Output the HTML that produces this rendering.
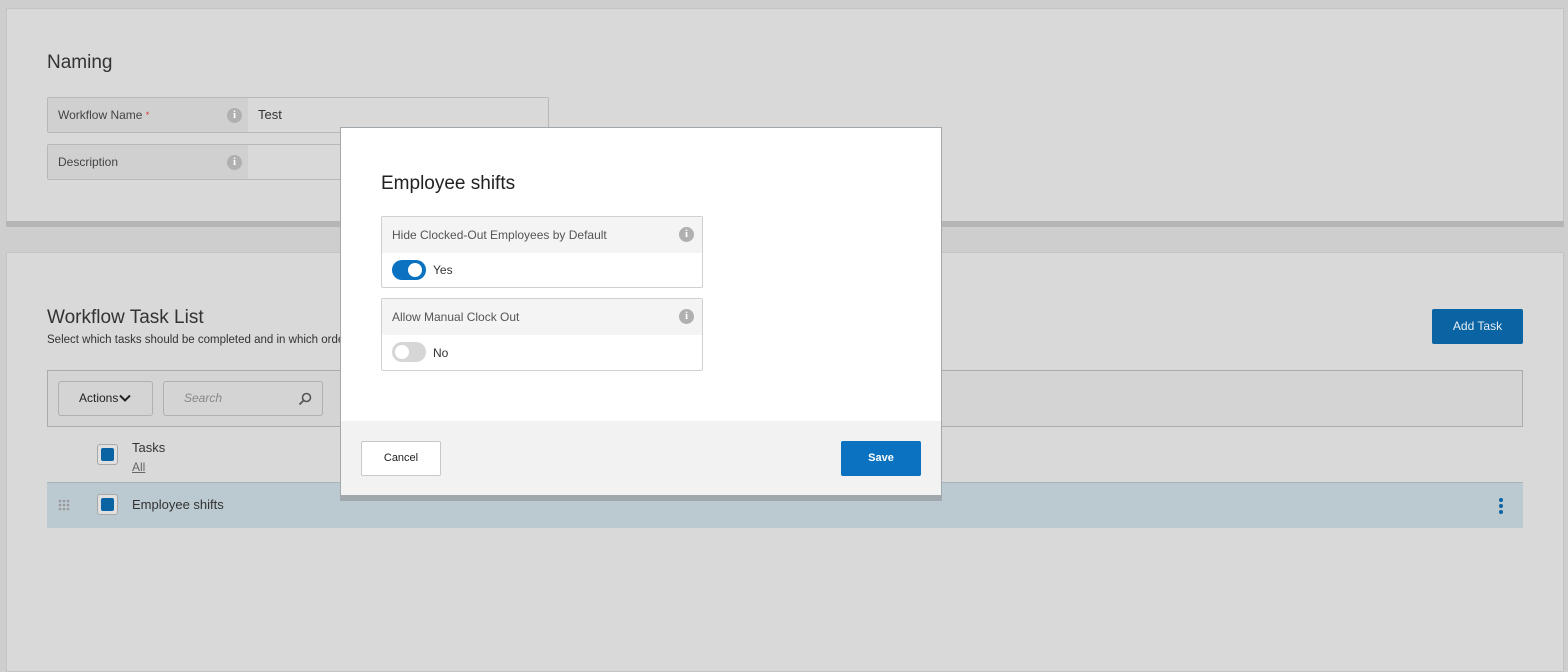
<!DOCTYPE html>
<html><head><style>
*{box-sizing:border-box;margin:0;padding:0}
body{width:1568px;height:659px;background:#cecece;font-family:"Liberation Sans",sans-serif;position:relative;overflow:hidden;color:#333}
.p{position:absolute;background:#d9d9d9;border:1px solid #c4c4c4}
.abs{position:absolute}
.fld{position:absolute;left:47px;width:502px;height:36px;border:1px solid #b8b8b8;border-radius:2px;background:#d9d9d9}
.fld .lab{position:absolute;left:0;top:0;width:200px;height:34px;background:#d0d0d0;font-size:12px;line-height:34px;padding-left:10px;color:#444}
.info{position:absolute;width:15px;height:15px;border-radius:50%;background:#b0b0b0;color:#fff;font-size:11px;font-weight:bold;text-align:center;line-height:15px;font-family:"Liberation Serif",serif}
.fld .lab2{position:absolute;left:200px;top:0;width:300px;height:34px;background:#d9d9d9}
.cb{position:absolute;width:21px;height:21px;border:1px solid #a8a8a8;border-radius:3px;background:#e0e0e0}
.cb:after{content:"";position:absolute;left:3px;top:3px;width:13px;height:13px;background:#0a64a4;border-radius:2px}
.card{position:absolute;left:40px;width:322px;border:1px solid #d0d0d0;border-radius:2px;background:#fff}
.card .h{height:36px;background:#f4f4f4;font-size:12px;line-height:36px;padding-left:10px;color:#555}
</style></head><body>
<div class="p" style="left:6px;top:8px;width:1558px;height:214px"></div>
<div class="abs" style="left:6px;top:221px;width:1558px;height:6px;background:#b5b5b5"></div>
<div class="abs" style="left:47px;top:52px;font-size:19px;color:#333">Naming</div>
<div class="fld" style="top:97px"><div class="lab">Workflow Name <span style="color:#d33;font-size:9px;vertical-align:top">*</span></div><div class="lab2"></div><div class="info" style="left:179px;top:10px">i</div><div class="abs" style="left:210px;top:9px;font-size:13px;color:#333">Test</div></div>
<div class="fld" style="top:144px"><div class="lab">Description</div><div class="lab2"></div><div class="info" style="left:179px;top:10px">i</div></div>

<div class="p" style="left:6px;top:252px;width:1558px;height:420px"></div>
<div class="abs" style="left:47px;top:307px;font-size:19px;color:#333">Workflow Task List</div>
<div class="abs" style="left:47px;top:334px;font-size:11.5px;color:#333;white-space:nowrap">Select which tasks should be completed and in which orde</div>
<div class="abs" style="left:1432px;top:309px;width:91px;height:35px;background:#0a64a4;border-radius:2px;color:#e8eef5;font-size:12px;text-align:center;line-height:35px">Add Task</div>
<div class="abs" style="left:47px;top:370px;width:1476px;height:57px;background:#d4d4d4;border:1px solid #ababab"></div>
<div class="abs" style="left:58px;top:381px;width:95px;height:35px;border:1px solid #b0b0b0;border-radius:3px;font-size:12px;line-height:33px;padding-left:20px;color:#222">Actions<svg width="12" height="8" viewBox="0 0 12 8" style="margin-left:1px"><path d="M1 1.5L6 6.5L11 1.5" stroke="#222" stroke-width="2" fill="none"/></svg></div>
<div class="abs" style="left:163px;top:381px;width:160px;height:35px;border:1px solid #b0b0b0;border-radius:3px;font-size:12px;line-height:33px;padding-left:20px;color:#888;font-style:italic">Search<svg class="abs" style="left:134px;top:10px" width="14" height="14" viewBox="0 0 14 14"><circle cx="8.5" cy="5.5" r="4" stroke="#555" stroke-width="1.6" fill="none"/><path d="M5.5 8.5L1.5 12.5" stroke="#555" stroke-width="1.8"/></svg></div>
<div class="cb" style="left:97px;top:444px"></div>
<div class="abs" style="left:132px;top:440px;font-size:13px;color:#333">Tasks</div>
<div class="abs" style="left:132px;top:460px;font-size:12px;color:#666;text-decoration:underline">All</div>
<div class="abs" style="left:47px;top:482px;width:1476px;height:46px;background:#bbc9d0;border-top:1px solid #a8b4ba"></div>
<svg class="abs" style="left:58px;top:499px" width="14" height="14"><g fill="#999"><circle cx="2" cy="2" r="1.3"/><circle cx="6" cy="2" r="1.3"/><circle cx="10" cy="2" r="1.3"/><circle cx="2" cy="6" r="1.3"/><circle cx="6" cy="6" r="1.3"/><circle cx="10" cy="6" r="1.3"/><circle cx="2" cy="10" r="1.3"/><circle cx="6" cy="10" r="1.3"/><circle cx="10" cy="10" r="1.3"/></g></svg>
<div class="cb" style="left:97px;top:494px"></div>
<div class="abs" style="left:132px;top:497px;font-size:13px;color:#333">Employee shifts</div>
<svg class="abs" style="left:1496px;top:497px" width="10" height="18"><g fill="#0a64a4"><circle cx="5" cy="3" r="2"/><circle cx="5" cy="9" r="2"/><circle cx="5" cy="15" r="2"/></g></svg>

<div class="abs" style="left:340px;top:127px;width:602px;height:374px;background:#a0a8ad"></div>
<div class="abs" style="left:341px;top:128px;width:600px;height:367px;background:#fff">
<div class="abs" style="left:40px;top:45px;font-size:19px;color:#222">Employee shifts</div>
<div class="card" style="top:88px;height:72px"><div class="h">Hide Clocked-Out Employees by Default</div><div class="info" style="left:297px;top:10px">i</div>
<div class="abs" style="left:10px;top:43px;width:34px;height:20px;border-radius:10px;background:#0a72c0"><div class="abs" style="left:16px;top:3px;width:14px;height:14px;border-radius:50%;background:#fff"></div></div>
<div class="abs" style="left:51px;top:46px;font-size:12px;color:#333">Yes</div></div>
<div class="card" style="top:170px;height:73px"><div class="h">Allow Manual Clock Out</div><div class="info" style="left:297px;top:10px">i</div>
<div class="abs" style="left:10px;top:43px;width:34px;height:20px;border-radius:10px;background:#d6d6d6"><div class="abs" style="left:3px;top:3px;width:14px;height:14px;border-radius:50%;background:#fff"></div></div>
<div class="abs" style="left:51px;top:47px;font-size:12px;color:#333">No</div></div>
<div class="abs" style="left:0;top:293px;width:600px;height:74px;background:#f2f2f2">
<div class="abs" style="left:20px;top:20px;width:80px;height:35px;background:#fff;border:1px solid #c8c8c8;border-radius:2px;font-size:11px;text-align:center;line-height:33px;color:#222">Cancel</div>
<div class="abs" style="left:500px;top:20px;width:80px;height:35px;background:#0a72c0;border-radius:2px;font-size:11px;text-align:center;line-height:35px;color:#fff;font-weight:bold">Save</div>
</div></div>
</body></html>
